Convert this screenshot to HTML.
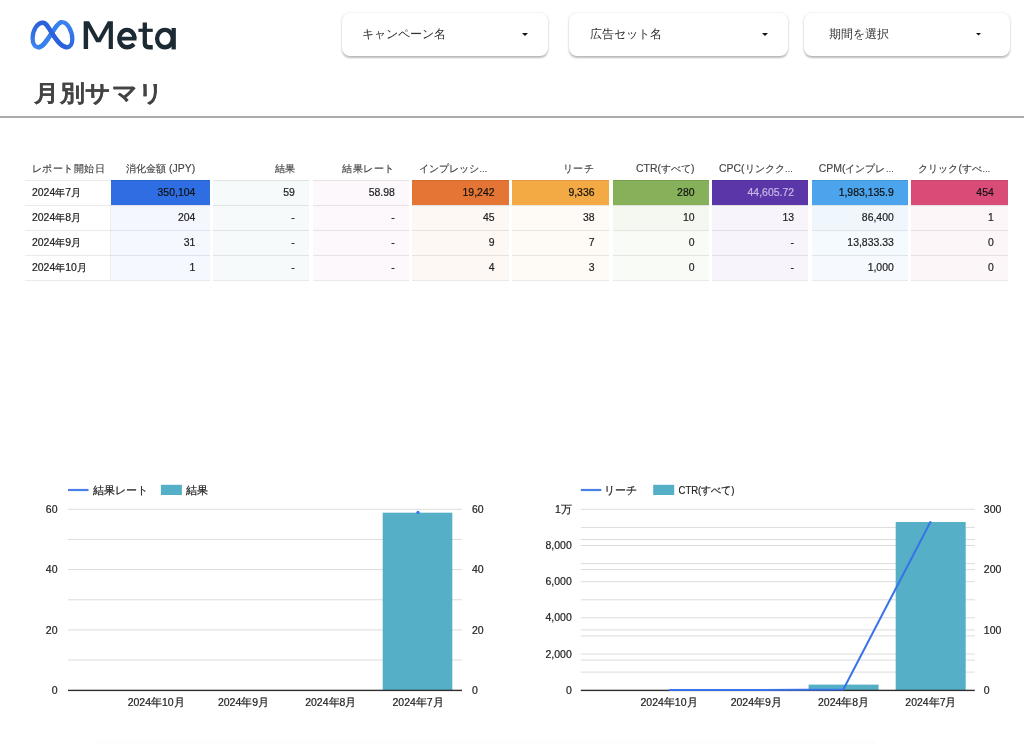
<!DOCTYPE html>
<html lang="ja"><head><meta charset="utf-8"><style>
html,body{margin:0;padding:0;background:#fff}
body{width:1024px;height:745px;overflow:hidden;position:relative;font-family:"Liberation Sans", sans-serif}
#wrap{position:absolute;left:0;top:0;width:1024px;height:745px;background:#fff;will-change:transform}
.card{position:absolute;top:13px;height:43px;background:#fff;border-radius:8px;box-shadow:0 1.5px 2px rgba(0,0,0,.26),0 0 3px rgba(0,0,0,.07)}
.cl{position:absolute;left:21px;top:13px;font-size:12px;color:#333;white-space:nowrap}
.title{position:absolute;left:34px;top:77.5px;font-size:24.5px;letter-spacing:0.5px;transform:scaleY(0.92);transform-origin:0 0;-webkit-text-stroke:0.1px #444;color:#444;font-weight:bold;white-space:nowrap}
.hr{position:absolute;left:0;top:116px;width:1024px;height:2px;background:#aaa}
.th{position:absolute;font-size:10.45px;color:#444;-webkit-text-stroke:0.15px #444;white-space:nowrap;overflow:hidden;line-height:14px}
.td{position:absolute;font-size:10.45px;color:#222;-webkit-text-stroke:0.2px currentColor;white-space:nowrap;line-height:24px}
.ls{letter-spacing:0.45px}
.el{font-size:8.2px;margin-left:0.3px}
.cell{position:absolute;height:24px;border-top:1px solid rgba(0,0,0,.085)}
.cl2{position:absolute;height:1px;background:rgba(0,0,0,.085)}
.rl{position:absolute;left:25px;width:86px;height:1px;background:#eaeaea}
svg text{font-family:"Liberation Sans", sans-serif}
.ax{font-size:10.5px;fill:#222;stroke:#222;stroke-width:0.2px}
.lg{font-size:10.5px;fill:#222;stroke:#222;stroke-width:0.2px}
</style></head><body><div id="wrap">

<svg style="position:absolute;left:0;top:0" width="190" height="70" viewBox="0 0 190 70">
  <defs>
  <linearGradient id="gL" gradientUnits="userSpaceOnUse" x1="0" y1="21" x2="0" y2="49"><stop offset="0" stop-color="#2a5ed8"/><stop offset="1" stop-color="#3c86f3"/></linearGradient>
  <linearGradient id="gR" gradientUnits="userSpaceOnUse" x1="0" y1="21" x2="0" y2="49"><stop offset="0" stop-color="#3c84f1"/><stop offset="1" stop-color="#2c66dd"/></linearGradient>
  </defs>
  <g fill="none" stroke-width="4.3" stroke-linecap="butt" stroke-linejoin="round">
  <path d="M51.8 33 C54.5 29 58 22.2 61.9 22.2 C67.5 22.2 72.3 31 72.3 39.2 C72.3 44.5 70 47.25 66.6 47.25 C61.5 47.25 57 41 51.8 33" stroke="url(#gR)"/>
  <path d="M51.8 33 C48.5 28 46.5 22.75 42.9 22.75 C37 22.75 32.6 30.5 32.6 38.2 C32.6 44 35 47.25 38.4 47.25 C42.5 47.25 46 42 51.8 33" stroke="url(#gL)"/>
  <path d="M38.4 47.25 C42.5 47.25 46 42 51.8 33 C54.5 29 58 22.2 61.9 22.2" stroke="#3780ef"/>
  <path d="M42.9 22.75 C46.5 22.75 48.5 28 51.8 33 C57 41 61.5 47.25 66.6 47.25" stroke="#2b62db"/>
  </g>
  <path fill="#1c2b33" d="M83.65 48.9 V21.3 H89.1 L98.45 38.1 L107.8 21.3 H112.9 V48.9 H108.7 V27.8 L100.5 42.2 H96.2 L88.1 27.8 V48.9 Z"/>
  <g fill="none" stroke="#1c2b33" stroke-width="4.3">
    <path d="M119.2 38.6 H134.65 A7.7 8.65 0 0 0 119.25 38.6 A7.7 8.65 0 0 0 126.95 47.25 C129.8 47.25 131.9 46.2 134 44.2" stroke-width="3.6"/>
    <path d="M119.25 38.6 A7.7 8.65 0 0 1 134.65 38.6"/>
    <path d="M119.25 38.6 A7.7 8.65 0 0 0 126.95 47.25 C129.8 47.25 131.9 46.2 134 44.2"/>
    <path d="M144.8 22.5 V43.3 C144.8 46.3 146.3 47.25 148.8 47.25 H152.75"/>
    <path d="M138.4 30.3 H152.75" stroke-width="3.2"/>
    <path d="M173.7 28 V49.4"/>
    <ellipse cx="164.9" cy="38.6" rx="7.85" ry="8.65"/>
  </g>
</svg>
<div class="card" style="left:341.5px;width:206.5px"><span class="cl" style="left:20.5px">キャンペーン名</span></div>
<svg style="position:absolute;left:522.0px;top:32.5px" width="6" height="4" viewBox="0 0 6 4"><path d="M0 0 H6 L3.0 3.0 Z" fill="#111"/></svg>
<div class="card" style="left:569px;width:218.5px"><span class="cl" style="left:20.5px">広告セット名</span></div>
<svg style="position:absolute;left:762.0px;top:32.5px" width="6" height="4" viewBox="0 0 6 4"><path d="M0 0 H6 L3.0 3.0 Z" fill="#111"/></svg>
<div class="card" style="left:804px;width:206px"><span class="cl" style="left:24.5px">期間を選択</span></div>
<svg style="position:absolute;left:976.0px;top:32.5px" width="5" height="4" viewBox="0 0 5 4"><path d="M0 0 H5 L2.5 2.5 Z" fill="#111"/></svg>
<div class="title">月別サマリ</div>
<div class="hr"></div>
<div class="th" style="left:32px;top:161.5px;width:80px;text-align:left"><span class="ls">レポート開始日</span></div>
<div class="th" style="left:111px;top:161.5px;width:84.2px;text-align:right">消化金額 (JPY)</div>
<div class="th" style="left:212.7px;top:161.5px;width:82.00000000000001px;text-align:right">結果</div>
<div class="th" style="left:312.6px;top:161.5px;width:82.09999999999998px;text-align:right"><span class="ls">結果レート</span></div>
<div class="th" style="left:419px;top:161.5px;width:89.69999999999999px;text-align:left">インプレッシ<span class="el">…</span></div>
<div class="th" style="left:512px;top:161.5px;width:82.40000000000005px;text-align:right"><span class="ls">リーチ</span></div>
<div class="th" style="left:612.5px;top:161.5px;width:81.90000000000005px;text-align:right">CTR(すべて)</div>
<div class="th" style="left:719px;top:161.5px;width:89.20000000000005px;text-align:left">CPC(リンクク<span class="el">…</span></div>
<div class="th" style="left:818.7px;top:161.5px;width:89.29999999999995px;text-align:left">CPM(インプレ<span class="el">…</span></div>
<div class="th" style="left:918.4px;top:161.5px;width:89.60000000000002px;text-align:left">クリック(すべ<span class="el">…</span></div>
<div class="rl" style="top:180px"></div>
<div class="rl" style="top:205px"></div>
<div class="rl" style="top:230px"></div>
<div class="rl" style="top:255px"></div>
<div class="rl" style="top:280px"></div>
<div class="td" style="left:32px;top:181px;width:80px;text-align:left">2024年7月</div>
<div class="cell" style="left:111px;top:180px;width:98.5px;background:#2f6ee2"></div>
<div class="td" style="left:111px;top:181px;width:84.3px;text-align:right;color:#111">350,104</div>
<div class="cell" style="left:212.7px;top:180px;width:96.30000000000001px;background:#f6fafb"></div>
<div class="td" style="left:212.7px;top:181px;width:82.10000000000001px;text-align:right;color:#222">59</div>
<div class="cell" style="left:312.6px;top:180px;width:96.39999999999998px;background:#fdf8fc"></div>
<div class="td" style="left:312.6px;top:181px;width:82.19999999999997px;text-align:right;color:#222">58.98</div>
<div class="cell" style="left:412px;top:180px;width:96.69999999999999px;background:#e57534"></div>
<div class="td" style="left:412px;top:181px;width:82.49999999999999px;text-align:right;color:#111">19,242</div>
<div class="cell" style="left:512px;top:180px;width:96.70000000000005px;background:#f3aa44"></div>
<div class="td" style="left:512px;top:181px;width:82.50000000000004px;text-align:right;color:#111">9,336</div>
<div class="cell" style="left:612.5px;top:180px;width:96.20000000000005px;background:#87b05a"></div>
<div class="td" style="left:612.5px;top:181px;width:82.00000000000004px;text-align:right;color:#111">280</div>
<div class="cell" style="left:712px;top:180px;width:96.20000000000005px;background:#5b36a9"></div>
<div class="td" style="left:712px;top:181px;width:82.00000000000004px;text-align:right;color:#c8b9e6">44,605.72</div>
<div class="cell" style="left:811.7px;top:180px;width:96.29999999999995px;background:#4ca5ec"></div>
<div class="td" style="left:811.7px;top:181px;width:82.09999999999995px;text-align:right;color:#111">1,983,135.9</div>
<div class="cell" style="left:911.4px;top:180px;width:96.60000000000002px;background:#d94c78"></div>
<div class="td" style="left:911.4px;top:181px;width:82.40000000000002px;text-align:right;color:#111">454</div>
<div class="td" style="left:32px;top:206px;width:80px;text-align:left">2024年8月</div>
<div class="cell" style="left:111px;top:205px;width:98.5px;background:#f4f8fe"></div>
<div class="td" style="left:111px;top:206px;width:84.3px;text-align:right;color:#222">204</div>
<div class="cell" style="left:212.7px;top:205px;width:96.30000000000001px;background:#f6fafb"></div>
<div class="td" style="left:212.7px;top:206px;width:82.10000000000001px;text-align:right;color:#222">-</div>
<div class="cell" style="left:312.6px;top:205px;width:96.39999999999998px;background:#fdf8fc"></div>
<div class="td" style="left:312.6px;top:206px;width:82.19999999999997px;text-align:right;color:#222">-</div>
<div class="cell" style="left:412px;top:205px;width:96.69999999999999px;background:#fef8f4"></div>
<div class="td" style="left:412px;top:206px;width:82.49999999999999px;text-align:right;color:#222">45</div>
<div class="cell" style="left:512px;top:205px;width:96.70000000000005px;background:#fefaf5"></div>
<div class="td" style="left:512px;top:206px;width:82.50000000000004px;text-align:right;color:#222">38</div>
<div class="cell" style="left:612.5px;top:205px;width:96.20000000000005px;background:#f5f8f1"></div>
<div class="td" style="left:612.5px;top:206px;width:82.00000000000004px;text-align:right;color:#222">10</div>
<div class="cell" style="left:712px;top:205px;width:96.20000000000005px;background:#f7f5fb"></div>
<div class="td" style="left:712px;top:206px;width:82.00000000000004px;text-align:right;color:#222">13</div>
<div class="cell" style="left:811.7px;top:205px;width:96.29999999999995px;background:#eff7fd"></div>
<div class="td" style="left:811.7px;top:206px;width:82.09999999999995px;text-align:right;color:#222">86,400</div>
<div class="cell" style="left:911.4px;top:205px;width:96.60000000000002px;background:#fdf6f8"></div>
<div class="td" style="left:911.4px;top:206px;width:82.40000000000002px;text-align:right;color:#222">1</div>
<div class="td" style="left:32px;top:231px;width:80px;text-align:left">2024年9月</div>
<div class="cell" style="left:111px;top:230px;width:98.5px;background:#f5f8fe"></div>
<div class="td" style="left:111px;top:231px;width:84.3px;text-align:right;color:#222">31</div>
<div class="cell" style="left:212.7px;top:230px;width:96.30000000000001px;background:#f6fafb"></div>
<div class="td" style="left:212.7px;top:231px;width:82.10000000000001px;text-align:right;color:#222">-</div>
<div class="cell" style="left:312.6px;top:230px;width:96.39999999999998px;background:#fdf8fc"></div>
<div class="td" style="left:312.6px;top:231px;width:82.19999999999997px;text-align:right;color:#222">-</div>
<div class="cell" style="left:412px;top:230px;width:96.69999999999999px;background:#fef8f5"></div>
<div class="td" style="left:412px;top:231px;width:82.49999999999999px;text-align:right;color:#222">9</div>
<div class="cell" style="left:512px;top:230px;width:96.70000000000005px;background:#fefbf6"></div>
<div class="td" style="left:512px;top:231px;width:82.50000000000004px;text-align:right;color:#222">7</div>
<div class="cell" style="left:612.5px;top:230px;width:96.20000000000005px;background:#f9fbf7"></div>
<div class="td" style="left:612.5px;top:231px;width:82.00000000000004px;text-align:right;color:#222">0</div>
<div class="cell" style="left:712px;top:230px;width:96.20000000000005px;background:#f7f5fb"></div>
<div class="td" style="left:712px;top:231px;width:82.00000000000004px;text-align:right;color:#222">-</div>
<div class="cell" style="left:811.7px;top:230px;width:96.29999999999995px;background:#f5fafe"></div>
<div class="td" style="left:811.7px;top:231px;width:82.09999999999995px;text-align:right;color:#222">13,833.33</div>
<div class="cell" style="left:911.4px;top:230px;width:96.60000000000002px;background:#fdf6f8"></div>
<div class="td" style="left:911.4px;top:231px;width:82.40000000000002px;text-align:right;color:#222">0</div>
<div class="td" style="left:32px;top:256px;width:80px;text-align:left">2024年10月</div>
<div class="cell" style="left:111px;top:255px;width:98.5px;background:#f5f8fe"></div>
<div class="td" style="left:111px;top:256px;width:84.3px;text-align:right;color:#222">1</div>
<div class="cell" style="left:212.7px;top:255px;width:96.30000000000001px;background:#f6fafb"></div>
<div class="td" style="left:212.7px;top:256px;width:82.10000000000001px;text-align:right;color:#222">-</div>
<div class="cell" style="left:312.6px;top:255px;width:96.39999999999998px;background:#fdf8fc"></div>
<div class="td" style="left:312.6px;top:256px;width:82.19999999999997px;text-align:right;color:#222">-</div>
<div class="cell" style="left:412px;top:255px;width:96.69999999999999px;background:#fef8f5"></div>
<div class="td" style="left:412px;top:256px;width:82.49999999999999px;text-align:right;color:#222">4</div>
<div class="cell" style="left:512px;top:255px;width:96.70000000000005px;background:#fefbf6"></div>
<div class="td" style="left:512px;top:256px;width:82.50000000000004px;text-align:right;color:#222">3</div>
<div class="cell" style="left:612.5px;top:255px;width:96.20000000000005px;background:#f9fbf7"></div>
<div class="td" style="left:612.5px;top:256px;width:82.00000000000004px;text-align:right;color:#222">0</div>
<div class="cell" style="left:712px;top:255px;width:96.20000000000005px;background:#f7f5fb"></div>
<div class="td" style="left:712px;top:256px;width:82.00000000000004px;text-align:right;color:#222">-</div>
<div class="cell" style="left:811.7px;top:255px;width:96.29999999999995px;background:#f6fafe"></div>
<div class="td" style="left:811.7px;top:256px;width:82.09999999999995px;text-align:right;color:#222">1,000</div>
<div class="cell" style="left:911.4px;top:255px;width:96.60000000000002px;background:#fdf6f8"></div>
<div class="td" style="left:911.4px;top:256px;width:82.40000000000002px;text-align:right;color:#222">0</div>
<div class="cl2" style="left:111px;width:98.5px;top:280px"></div>
<div class="cl2" style="left:212.7px;width:96.30000000000001px;top:280px"></div>
<div class="cl2" style="left:312.6px;width:96.39999999999998px;top:280px"></div>
<div class="cl2" style="left:412px;width:96.69999999999999px;top:280px"></div>
<div class="cl2" style="left:512px;width:96.70000000000005px;top:280px"></div>
<div class="cl2" style="left:612.5px;width:96.20000000000005px;top:280px"></div>
<div class="cl2" style="left:712px;width:96.20000000000005px;top:280px"></div>
<div class="cl2" style="left:811.7px;width:96.29999999999995px;top:280px"></div>
<div class="cl2" style="left:911.4px;width:96.60000000000002px;top:280px"></div>
<div style="position:absolute;left:110px;top:205px;width:1px;height:75px;background:rgba(0,0,0,.07)"></div>
<svg style="position:absolute;left:0;top:0" width="1024" height="745" viewBox="0 0 1024 745">
<line x1="68" x2="462" y1="509.3" y2="509.3" stroke="#dcdcdc" stroke-width="1"/>
<line x1="68" x2="462" y1="539.45" y2="539.45" stroke="#dcdcdc" stroke-width="1"/>
<line x1="68" x2="462" y1="569.6" y2="569.6" stroke="#dcdcdc" stroke-width="1"/>
<line x1="68" x2="462" y1="599.75" y2="599.75" stroke="#dcdcdc" stroke-width="1"/>
<line x1="68" x2="462" y1="629.9" y2="629.9" stroke="#dcdcdc" stroke-width="1"/>
<line x1="68" x2="462" y1="660.05" y2="660.05" stroke="#dcdcdc" stroke-width="1"/>
<rect x="382.7" y="512.7" width="69.60000000000002" height="177.5" fill="#55b0c7"/>
<rect x="68" y="689.7" width="394" height="1.4" fill="#2e2e2e"/>
<text x="57.5" y="512.9" text-anchor="end" class="ax">60</text>
<text x="57.5" y="573.2" text-anchor="end" class="ax">40</text>
<text x="57.5" y="633.5" text-anchor="end" class="ax">20</text>
<text x="57.5" y="693.8000000000001" text-anchor="end" class="ax">0</text>
<text x="472" y="512.9" class="ax">60</text>
<text x="472" y="573.2" class="ax">40</text>
<text x="472" y="633.5" class="ax">20</text>
<text x="472" y="693.8000000000001" class="ax">0</text>
<text x="156.2" y="706" text-anchor="middle" class="ax">2024年10月</text>
<text x="243.5" y="706" text-anchor="middle" class="ax">2024年9月</text>
<text x="330.79999999999995" y="706" text-anchor="middle" class="ax">2024年8月</text>
<text x="418.09999999999997" y="706" text-anchor="middle" class="ax">2024年7月</text>
<line x1="68" x2="88.5" y1="490" y2="490" stroke="#4a7fe8" stroke-width="2.2"/>
<text x="93" y="494" class="lg">結果レート</text>
<rect x="160.9" y="484.8" width="21" height="10.2" fill="#55b0c7"/>
<text x="186.20000000000002" y="494" class="lg">結果</text>
<circle cx="418" cy="512.3" r="1.6" fill="#3a72e8"/>
<line x1="580.8" x2="974.8" y1="509.3" y2="509.3" stroke="#dcdcdc" stroke-width="1"/>
<line x1="580.8" x2="974.8" y1="527.4" y2="527.4" stroke="#dcdcdc" stroke-width="1"/>
<line x1="580.8" x2="974.8" y1="539.5" y2="539.5" stroke="#dcdcdc" stroke-width="1"/>
<line x1="580.8" x2="974.8" y1="545.5" y2="545.5" stroke="#dcdcdc" stroke-width="1"/>
<line x1="580.8" x2="974.8" y1="563.6" y2="563.6" stroke="#dcdcdc" stroke-width="1"/>
<line x1="580.8" x2="974.8" y1="569.6" y2="569.6" stroke="#dcdcdc" stroke-width="1"/>
<line x1="580.8" x2="974.8" y1="581.7" y2="581.7" stroke="#dcdcdc" stroke-width="1"/>
<line x1="580.8" x2="974.8" y1="599.8" y2="599.8" stroke="#dcdcdc" stroke-width="1"/>
<line x1="580.8" x2="974.8" y1="617.8" y2="617.8" stroke="#dcdcdc" stroke-width="1"/>
<line x1="580.8" x2="974.8" y1="629.9" y2="629.9" stroke="#dcdcdc" stroke-width="1"/>
<line x1="580.8" x2="974.8" y1="635.9" y2="635.9" stroke="#dcdcdc" stroke-width="1"/>
<line x1="580.8" x2="974.8" y1="654.0" y2="654.0" stroke="#dcdcdc" stroke-width="1"/>
<line x1="580.8" x2="974.8" y1="660.1" y2="660.1" stroke="#dcdcdc" stroke-width="1"/>
<line x1="580.8" x2="974.8" y1="672.1" y2="672.1" stroke="#dcdcdc" stroke-width="1"/>
<rect x="808.6" y="684.6" width="70.0" height="5.600000000000023" fill="#55b0c7"/>
<rect x="895.7" y="522" width="70.0" height="168.20000000000005" fill="#55b0c7"/>
<rect x="580.8" y="689.7" width="394.0" height="1.4" fill="#2e2e2e"/>
<polyline points="669,690.1 756,690.1 843.3,689.5 930.8,521.3" fill="none" stroke="#3a72e8" stroke-width="2" stroke-linejoin="round"/>
<text x="571.8" y="512.9" text-anchor="end" class="ax">1万</text>
<text x="571.8" y="549.1" text-anchor="end" class="ax">8,000</text>
<text x="571.8" y="585.2" text-anchor="end" class="ax">6,000</text>
<text x="571.8" y="621.4" text-anchor="end" class="ax">4,000</text>
<text x="571.8" y="657.6" text-anchor="end" class="ax">2,000</text>
<text x="571.8" y="693.8000000000001" text-anchor="end" class="ax">0</text>
<text x="983.8" y="512.9" class="ax">300</text>
<text x="983.8" y="573.2" class="ax">200</text>
<text x="983.8" y="633.5" class="ax">100</text>
<text x="983.8" y="693.8000000000001" class="ax">0</text>
<text x="669.0" y="706" text-anchor="middle" class="ax">2024年10月</text>
<text x="756.3" y="706" text-anchor="middle" class="ax">2024年9月</text>
<text x="843.6" y="706" text-anchor="middle" class="ax">2024年8月</text>
<text x="930.9" y="706" text-anchor="middle" class="ax">2024年7月</text>
<line x1="580.8" x2="601.3" y1="490" y2="490" stroke="#4a7fe8" stroke-width="2.2"/>
<text x="604.3" y="494" class="lg">リーチ</text>
<rect x="653.2" y="484.8" width="21" height="10.2" fill="#55b0c7"/>
<text x="678.5" y="494" class="lg" textLength="56" lengthAdjust="spacingAndGlyphs">CTR(すべて)</text>
</svg>
<div style="position:absolute;left:96px;top:740px;width:780px;height:5px;background:#fdfdfd"></div>
</div></body></html>
